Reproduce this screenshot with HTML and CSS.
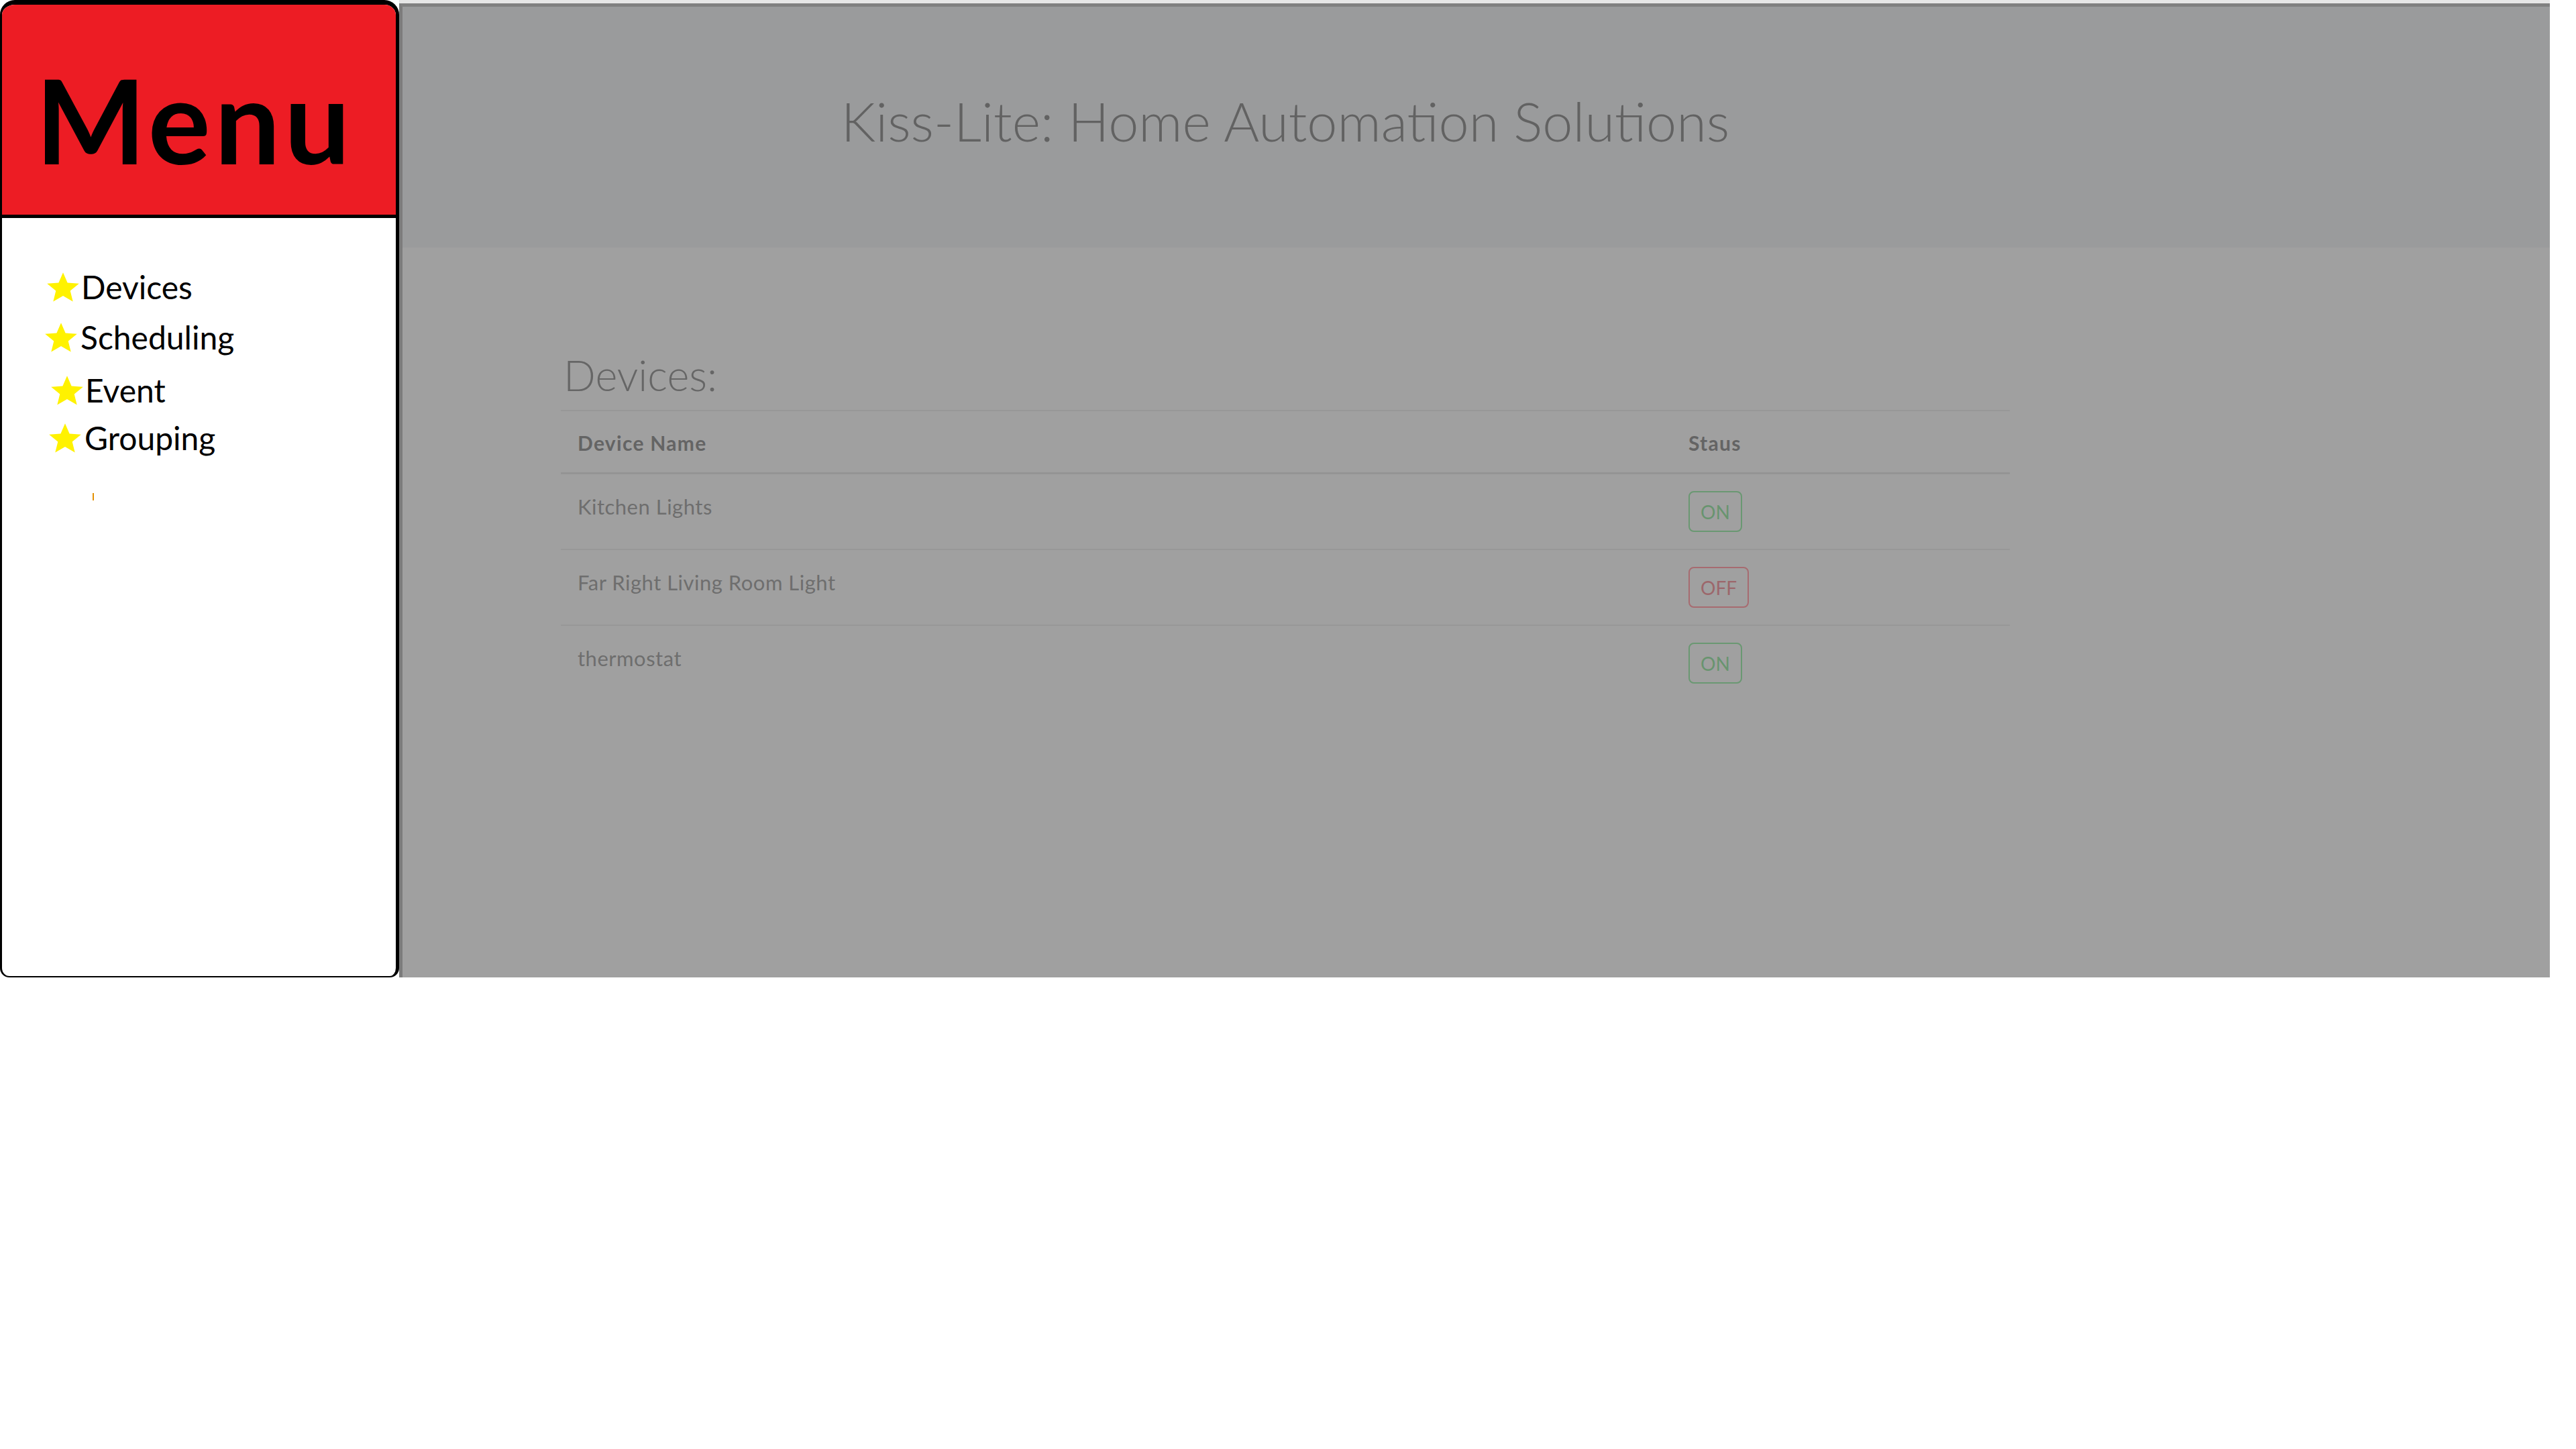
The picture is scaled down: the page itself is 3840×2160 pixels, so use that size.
FILE: index.html
```html
<!DOCTYPE html>
<html lang="en">
<head>
<meta charset="utf-8">
<title>Kiss-Lite: Home Automation Solutions</title>
<link rel="stylesheet" href="styles.css">
</head>
<body>
<div class="app">
  <aside class="menu">
    <div class="menu-head">Menu</div>
    <ul class="nav">
      <li class="nav-item"><svg class="star" viewBox="0 0 24 23" preserveAspectRatio="none"><polygon points="12,0.6 15.17,8.23 23.41,8.89 17.14,14.27 19.05,22.31 12,18 4.95,22.31 6.86,14.27 0.59,8.89 8.83,8.23"/></svg><span>Devices</span></li>
      <li class="nav-item nav-item-sched"><svg class="star" viewBox="0 0 24 23" preserveAspectRatio="none"><polygon points="12,0.6 15.17,8.23 23.41,8.89 17.14,14.27 19.05,22.31 12,18 4.95,22.31 6.86,14.27 0.59,8.89 8.83,8.23"/></svg><span>Scheduling</span></li>
      <li class="nav-item nav-item-event"><svg class="star" viewBox="0 0 24 23" preserveAspectRatio="none"><polygon points="12,0.6 15.17,8.23 23.41,8.89 17.14,14.27 19.05,22.31 12,18 4.95,22.31 6.86,14.27 0.59,8.89 8.83,8.23"/></svg><span>Event</span></li>
      <li class="nav-item nav-item-group"><svg class="star" viewBox="0 0 24 23" preserveAspectRatio="none"><polygon points="12,0.6 15.17,8.23 23.41,8.89 17.14,14.27 19.05,22.31 12,18 4.95,22.31 6.86,14.27 0.59,8.89 8.83,8.23"/></svg><span>Grouping</span></li>
    </ul>
    <div class="tick"></div>
  </aside>
  <main class="main">
    <header class="banner">
      <div class="container">
        <h1 class="title">Kiss-Lite: Home Automation Solutions</h1>
      </div>
    </header>
    <section class="content">
      <div class="container">
        <h2 class="section-title">Devices:</h2>
        <div class="table">
          <div class="row row-head">
            <div class="cell">Device Name</div>
            <div class="cell">Staus</div>
          </div>
          <div class="row">
            <div class="cell cell-name">Kitchen Lights</div>
            <div class="cell cell-status"><span class="btn btn-on">ON</span></div>
          </div>
          <div class="row">
            <div class="cell cell-name">Far Right Living Room Light</div>
            <div class="cell cell-status"><span class="btn btn-off">OFF</span></div>
          </div>
          <div class="row row-last">
            <div class="cell cell-name">thermostat</div>
            <div class="cell cell-status"><span class="btn btn-on">ON</span></div>
          </div>
        </div>
      </div>
    </section>
  </main>
</div>
</body>
</html>
```

FILE: styles.css
```css
html, body {
  margin: 0;
  padding: 0;
  background: #ffffff;
}

body {
  font-family: Lato, "Liberation Sans", sans-serif;
}

.app {
  display: flex;
  align-items: flex-start;
}

/* ---------- side menu ---------- */
.menu {
  width: 595px;
  height: 1457px;
  box-sizing: border-box;
  flex: none;
  background: #ffffff;
  border-style: solid;
  border-color: #000000;
  border-width: 7px 5px 2px 3px;
  border-radius: 22px 22px 14px 14px;
  overflow: hidden;
}

.menu-head {
  height: 318px;
  box-sizing: border-box;
  background: #ed1c24;
  border-bottom: 5px solid #000000;
  padding: 84px 0 0 50px;
  font-family: Lato, "Liberation Sans", sans-serif;
  font-weight: 700;
  font-size: 174px;
  letter-spacing: 6px;
  line-height: 1;
  color: #000000;
}

.nav {
  list-style: none;
  margin: 0;
  padding: 79px 0 0 66px;
  display: flex;
  flex-direction: column;
  gap: 27px;
}

.nav-item {
  display: flex;
  align-items: center;
  gap: 2px;
  height: 48px;
  font-size: 48px;
  line-height: 1;
  color: #000000;
}

.nav-item-sched {
  margin-left: -3px;
  gap: 4px;
}

.nav-item-event {
  margin-left: 6px;
  margin-top: 4px;
}

.nav-item-group {
  margin-left: 3px;
  margin-top: -4px;
  gap: 4px;
}

.star {
  width: 50px;
  height: 46px;
  flex: none;
  fill: #fff200;
}

.tick {
  width: 2px;
  height: 11px;
  margin: 58px 0 0 135px;
  background: #e39000;
}

/* ---------- main area ---------- */
.main {
  width: 3206px;
  height: 1452px;
  margin-top: 5px;
  box-sizing: border-box;
  flex: none;
  background: #a0a0a0;
  border-top: 5px solid #808080;
  border-left: 5px solid #7c7c7c;
  box-shadow: 0 -5px 0 #e6e6e6;
}

.container {
  width: 2160px;
  margin-left: 236px;
}

.banner {
  height: 359px;
  box-sizing: border-box;
  background: #9a9b9c;
  padding-top: 129px;
}

.title {
  margin: 0;
  text-align: center;
  font-weight: 300;
  font-size: 81px;
  line-height: 1;
  color: #626262;
}

.content {
  padding-top: 158px;
}

.section-title {
  margin: 0;
  padding: 0 0 21px 4px;
  border-bottom: 2px solid #979797;
  font-weight: 300;
  font-size: 63px;
  line-height: 1;
  color: #666666;
}

.row {
  display: grid;
  grid-template-columns: 1656px 1fr;
  height: 111px;
  border-bottom: 2px solid #979797;
}

.row-head {
  height: 91px;
  border-bottom: 3px solid #949494;
  font-weight: 700;
  font-size: 30px;
  letter-spacing: 1.3px;
  line-height: 1;
  color: #646464;
}

.row-head .cell {
  padding: 32px 0 0 25px;
}

.row-last {
  border-bottom: none;
}

.cell-name {
  padding: 33px 0 0 25px;
  font-weight: 400;
  font-size: 31px;
  letter-spacing: 0.5px;
  line-height: 1;
  color: #6e6e6e;
}

.cell-status {
  padding: 25px 0 0 25px;
}

.btn {
  display: inline-flex;
  align-items: center;
  height: 61px;
  box-sizing: border-box;
  padding: 0 16px;
  border: 2px solid;
  border-radius: 8px;
  font-size: 28px;
  font-weight: 400;
  line-height: 1;
}

.btn-on {
  border-color: #6a9872;
  color: #68946f;
}

.btn-off {
  border-color: #a76b70;
  color: #9c676b;
}
```
